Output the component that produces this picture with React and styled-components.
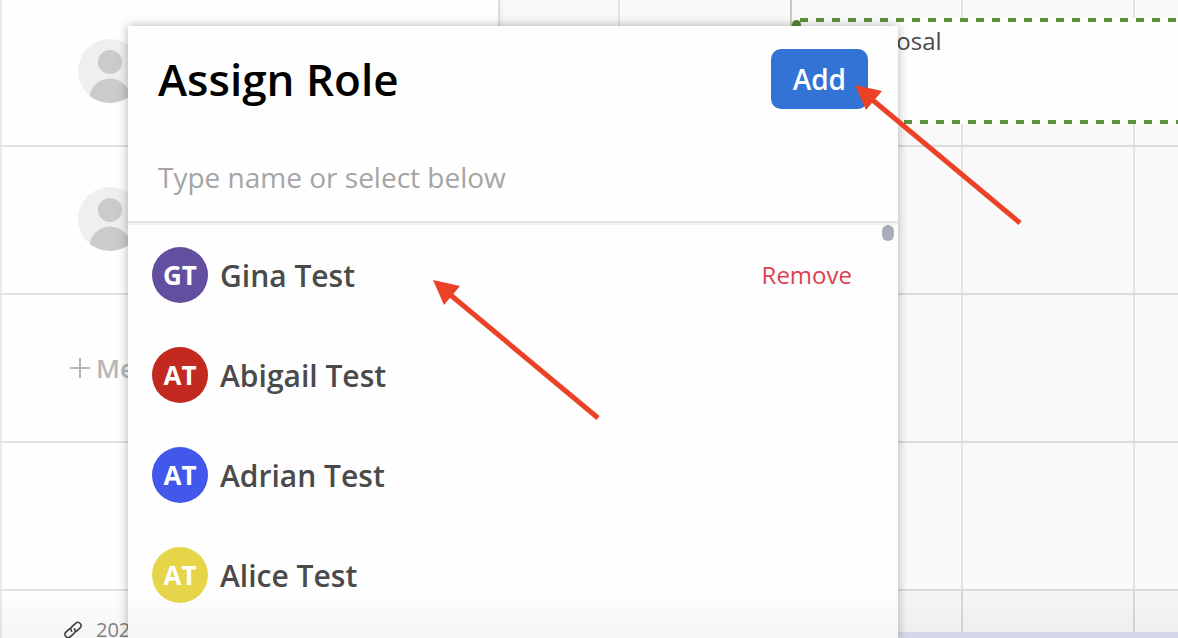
import React from "react";
import styled, { createGlobalStyle } from "styled-components";

const GlobalStyle = createGlobalStyle`
  * {
    box-sizing: border-box;
  }
  body {
    margin: 0;
    font-family: "Open Sans", "Noto Sans", sans-serif;
    color: #4a4a4a;
  }
  button, input {
    font-family: inherit;
  }
`;

const Page = styled.div`
  position: relative;
  height: 100vh;
  overflow: hidden;
  background-color: #fefefe;
`;
const Board = styled.div`
  display: flex;
  height: 100%;
`;
const Sidebar = styled.aside`
  flex: 0 0 500px;
  background-color: #fefefe;
  background-image: linear-gradient(90deg, #e4e4e4, #fefefe 3px);
  border-right: 2px solid #dedede;
  box-shadow: 2px 0 4px rgba(0, 0, 0, 0.05);
  z-index: 1;
`;
const SideRow = styled.div`
  display: flex;
  align-items: center;
  height: ${({ $first }) => ($first ? 147 : 148)}px;
  padding-left: ${({ $indent }) => $indent || 78}px;
  padding-bottom: ${({ $indent }) => ($indent ? 0 : 3)}px;
  border-bottom: 2px solid #e2e2e2;
`;
const AddMember = styled.button`
  display: flex;
  align-items: center;
  gap: 6px;
  padding: 0;
  border: 0;
  background: none;
  color: #b7b7b7;
  font-size: 26px;
  font-weight: 600;
  line-height: 36px;
`;
const ProjectLink = styled.a`
  display: flex;
  align-items: center;
  gap: 14px;
  padding: 24px 0 0 64px;
  color: #868686;
  font-size: 20px;
  line-height: 30px;
  text-decoration: none;
`;

const Calendar = styled.main`
  position: relative;
  flex: 1;
  min-width: 0;
  overflow: hidden;
  background-color: #f9f9f9;
`;
const Week = styled.div`
  display: flex;
  height: ${({ $first }) => ($first ? 147 : 148)}px;
  border-bottom: 2px solid #dadada;
`;
const Day = styled.div`
  flex: 0 0 ${({ $width }) => $width || 172}px;
  border-right: 2px solid ${({ $dark }) => ($dark ? "#c8c8c8" : "#e3e3e3")};
`;
const Summary = styled.div`
  background-color: #f6f6f6;
  ${Week} {
    height: 41px;
    border-bottom: 0;
  }
  ${Day} {
    border-color: #d8d8d8;
  }
`;
const SummaryBar = styled.div`
  height: 40px;
  background-color: #dcdff2;
`;
/* an event that lies over the days it spans */
const Event = styled.div`
  position: absolute;
  top: 18px;
  left: 292px;
  right: 0;
  height: 106px;
  padding: 6px 0 0 51px;
  font-size: 24px;
  line-height: 34px;
  background:
    repeating-linear-gradient(90deg, #5f9138 0 8px, transparent 8px 16px) 8px 0 / 100% 4px no-repeat,
    repeating-linear-gradient(90deg, #5f9138 0 8px, transparent 8px 16px) 0 100% / 100% 4px no-repeat,
    #fefefe;
  &::before {
    content: "";
    position: absolute;
    top: 2px;
    bottom: 2px;
    left: 0;
    width: 9px;
    border-radius: 5px;
    background-color: #568a32;
  }
`;

const Overlay = styled.div`
  position: absolute;
  inset: 0;
  z-index: 2;
  padding: 26px 280px 0 128px;
`;
const Modal = styled.section`
  height: 100%;
  background-color: #fefefe;
  box-shadow: 0 0 10px rgba(0, 0, 0, 0.3);
`;
const ModalHeader = styled.header`
  display: flex;
  justify-content: space-between;
  align-items: center;
  padding: 23px 30px 0;
`;
const Title = styled.h1`
  margin: 0;
  color: #000;
  font-size: 44px;
  font-weight: 600;
  line-height: 60px;
`;
const AddButton = styled.button`
  height: 60px;
  padding: 0 22px;
  border: 0;
  border-radius: 10px;
  background-color: #3273d5;
  color: #fff;
  font-size: 28px;
  font-weight: 600;
`;
const SearchInput = styled.input`
  display: block;
  width: 100%;
  height: 86px;
  margin-top: 26px;
  padding: 0 30px 2px;
  border: 0;
  outline: none;
  background: none;
  font-size: 28px;
  &::placeholder {
    color: #a5a5a5;
    opacity: 1;
  }
`;
const MemberList = styled.ul`
  position: relative;
  margin: 0;
  padding: 2px 0 0;
  list-style: none;
  border-top: 2px solid #e4e4e4;
  box-shadow: inset 0 2px 0 #f0f0f0;
`;
const ScrollThumb = styled.div`
  position: absolute;
  top: 2px;
  right: 4px;
  width: 12px;
  height: 16px;
  border-radius: 6px;
  background-color: #a8adb7;
`;
const Member = styled.li`
  display: flex;
  align-items: center;
  gap: 12px;
  height: 100px;
  padding: 0 46px 0 24px;
`;
const Avatar = styled.div`
  display: flex;
  justify-content: center;
  align-items: center;
  width: 56px;
  height: 56px;
  border-radius: 50%;
  background-color: ${({ $color }) => $color};
  color: #fff;
  font-size: 26px;
  font-weight: 700;
`;
const Name = styled.span`
  flex: 1;
  padding-top: 2px;
  font-size: 30px;
  font-weight: 600;
  line-height: 40px;
`;
const RemoveButton = styled.button`
  padding: 0 0 2px;
  border: 0;
  background: none;
  color: #db424d;
  font-size: 24px;
`;
const BottomShade = styled.div`
  position: absolute;
  inset: auto 0 0;
  z-index: 3;
  height: 48px;
  pointer-events: none;
  background: linear-gradient(transparent, rgba(0, 0, 0, 0.035));
`;
const ArrowSvg = styled.svg`
  position: absolute;
  top: ${({ $top }) => $top}px;
  left: ${({ $left }) => $left}px;
  z-index: 4;
  overflow: visible;
  pointer-events: none;
`;

const members = [
  { name: "Gina Test", initials: "GT", color: "#634fa0", assigned: true },
  { name: "Abigail Test", initials: "AT", color: "#c22a1f" },
  { name: "Adrian Test", initials: "AT", color: "#4158ea" },
  { name: "Alice Test", initials: "AT", color: "#e6d548" },
];

function Person({ id }) {
  return (
    <svg width="64" height="64" viewBox="0 0 64 64" aria-hidden="true">
      <clipPath id={id}>
        <circle cx="32" cy="32" r="32" />
      </clipPath>
      <g clipPath={`url(#${id})`}>
        <rect width="64" height="64" fill="#efefef" />
        <circle cx="32" cy="23" r="12" fill="#cbcbcb" />
        <circle cx="32" cy="60" r="20.5" fill="#cbcbcb" />
      </g>
    </svg>
  );
}

function LinkIcon() {
  return (
    <svg width="18" height="18" viewBox="0 0 18 18" aria-hidden="true">
      <g transform="rotate(-42 9 9)" fill="none" stroke="#3c3c3c" strokeWidth="1.5" strokeLinecap="round">
        <path d="M7.5 5.8H2.6a3.2 3.2 0 0 0 0 6.4H7.5A3.2 3.2 0 0 0 10.7 9" />
        <path d="M10.5 12.2H15.4a3.2 3.2 0 0 0 0-6.4H10.5A3.2 3.2 0 0 0 7.3 9" />
      </g>
    </svg>
  );
}

function Arrow({ top, left }) {
  return (
    <ArrowSvg $top={top} $left={left} width="166" height="140" aria-hidden="true">
      <path d="M14 12 165 138" stroke="#eb4126" strokeWidth="5" />
      <path d="M0 0 27 6 11 25Z" fill="#eb4126" />
    </ArrowSvg>
  );
}

function Days() {
  return (
    <>
      <Day $width={120} />
      <Day $dark />
      <Day $width={171} />
      <Day />
    </>
  );
}

function App() {
  return (
    <Page>
      <GlobalStyle />
      <Board>
        <Sidebar>
          <SideRow $first>
            <Person id="person-1" />
          </SideRow>
          <SideRow>
            <Person id="person-2" />
          </SideRow>
          <SideRow $indent={70}>
            <AddMember>
              <svg width="20" height="20" viewBox="0 0 20 20" aria-hidden="true">
                <path d="M10 0V20M0 10H20" stroke="currentColor" strokeWidth="2" />
              </svg>
              Member
            </AddMember>
          </SideRow>
          <SideRow />
          <ProjectLink href="#">
            <LinkIcon />
            2021
          </ProjectLink>
        </Sidebar>
        <Calendar>
          <Week $first>
            <Days />
          </Week>
          <Week>
            <Days />
          </Week>
          <Week>
            <Days />
          </Week>
          <Week>
            <Days />
          </Week>
          <Summary>
            <Week>
              <Days />
            </Week>
            <SummaryBar />
          </Summary>
          <Event>Proposal</Event>
        </Calendar>
      </Board>

      <Overlay>
        <Modal role="dialog" aria-labelledby="assign-title">
          <ModalHeader>
            <Title id="assign-title">Assign Role</Title>
            <AddButton>Add</AddButton>
          </ModalHeader>
          <SearchInput
            type="text"
            aria-label="Type name or select below"
            placeholder="Type name or select below"
          />
          <MemberList>
            {members.map((member) => (
              <Member key={member.name}>
                <Avatar $color={member.color}>{member.initials}</Avatar>
                <Name>{member.name}</Name>
                {member.assigned && <RemoveButton>Remove</RemoveButton>}
              </Member>
            ))}
            <ScrollThumb />
          </MemberList>
        </Modal>
      </Overlay>

      <BottomShade />
      <Arrow top={85} left={855} />
      <Arrow top={280} left={433} />
    </Page>
  );
}

export default App;
